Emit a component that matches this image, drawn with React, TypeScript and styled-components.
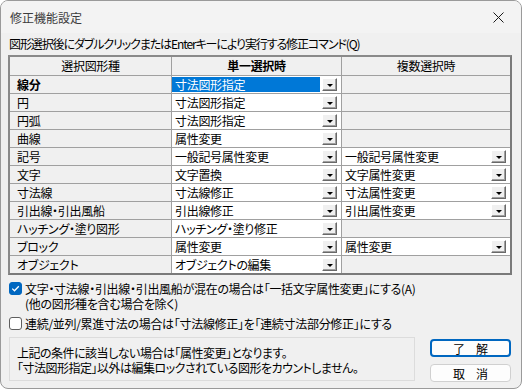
import React from 'react';
import styled, { createGlobalStyle } from 'styled-components';

const GlobalStyle = createGlobalStyle`
  html, body {
    margin: 0;
    padding: 0;
    background: #ffffff;
  }
  * {
    box-sizing: border-box;
  }
`;

const Window = styled.div`
  width: 522px;
  height: 389px;
  display: flex;
  flex-direction: column;
  background: #f0f0f0;
  border: 1px solid #9a9a9a;
  border-radius: 8px;
  overflow: hidden;
  font-family: 'Noto Sans CJK JP', 'Noto Sans', sans-serif;
  font-feature-settings: 'palt';
  font-size: 12px;
  color: #000;
`;

const TitleBar = styled.div`
  height: 32px;
  flex-shrink: 0;
  display: flex;
  align-items: center;
  justify-content: space-between;
  padding-left: 9px;
  background: #f3f3f3;
`;

const TitleText = styled.span`
  color: #3c3c3c;
  font-size: 12px;
`;

const CloseButton = styled.div`
  width: 46px;
  height: 32px;
  display: flex;
  align-items: center;
  justify-content: center;
`;

const Body = styled.div`
  flex: 1;
  display: flex;
  flex-direction: column;
  padding: 3px 9px 0 7px;
`;

const Label = styled.div`
  height: 16px;
  line-height: 16px;
  padding-left: 1px;
  letter-spacing: -1.1px;
  white-space: nowrap;
`;

const Grid = styled.div`
  margin-top: 3px;
  display: grid;
  grid-template-columns: 161px 169px 168px;
  grid-template-rows: 18px repeat(11, 17px);
  gap: 1px;
  background: #a0a0a0;
  border: 2px solid #8a8a8a;
  border-right-color: #7a7a7a;
  border-bottom-color: #7a7a7a;
  letter-spacing: -0.3px;
`;

const HeadCell = styled.div<{ $bold?: boolean }>`
  display: flex;
  align-items: center;
  justify-content: center;
  background: #f0f0f0;
  font-weight: ${(p) => (p.$bold ? 700 : 400)};
  line-height: 18px;
`;

const NameCell = styled.div<{ $bold?: boolean }>`
  display: flex;
  align-items: center;
  padding-left: 7px;
  background: #f0f0f0;
  font-weight: ${(p) => (p.$bold ? 700 : 400)};
  white-space: nowrap;
`;

const ComboCell = styled.div<{ $empty?: boolean }>`
  display: flex;
  align-items: center;
  padding-right: 4px;
  background: ${(p) => (p.$empty ? '#f0f0f0' : '#ffffff')};
`;

const ComboText = styled.span<{ $selected?: boolean }>`
  flex: 1;
  align-self: stretch;
  margin: 1px 2px 1px 0;
  padding-left: 3px;
  display: flex;
  align-items: center;
  white-space: nowrap;
  background: ${(p) => (p.$selected ? '#0078d7' : 'transparent')};
  color: ${(p) => (p.$selected ? '#ffffff' : '#000000')};
`;

const DropButton = styled.span`
  width: 15px;
  height: 13px;
  display: flex;
  align-items: center;
  justify-content: center;
  background: #f0f0f0;
  border: 1px solid;
  border-color: #ffffff #696969 #696969 #ffffff;
  box-shadow: inset -1px -1px 0 #a0a0a0;
`;

const Arrow = styled.span`
  width: 0;
  height: 0;
  margin-top: 1px;
  border-left: 3px solid transparent;
  border-right: 3px solid transparent;
  border-top: 3px solid #000;
`;

const CheckRow = styled.div<{ $top: number }>`
  display: flex;
  align-items: flex-start;
  gap: 3px;
  margin-top: ${(p) => p.$top}px;
  padding-left: 1px;
  letter-spacing: -0.3px;
`;

const Lines = styled.div`
  display: flex;
  flex-direction: column;
`;

const Line = styled.div`
  height: 15px;
  line-height: 15px;
  white-space: nowrap;
`;

const Box = styled.span<{ $checked?: boolean }>`
  width: 13px;
  height: 13px;
  margin-top: 1px;
  flex-shrink: 0;
  border-radius: 3px;
  display: flex;
  align-items: center;
  justify-content: center;
  background: ${(p) => (p.$checked ? '#0067c0' : '#ffffff')};
  border: 1px solid ${(p) => (p.$checked ? '#0067c0' : '#5e5e5e')};
`;

const Bottom = styled.div`
  display: flex;
  margin-top: 6px;
  padding-left: 1px;
  gap: 15px;
`;

const InfoBox = styled.div`
  width: 406px;
  height: 44px;
  padding: 7px 0 0 7px;
  border: 1px solid #dcdcdc;
  background: #f0f0f0;
  letter-spacing: -0.5px;
`;

const Buttons = styled.div`
  display: flex;
  flex-direction: column;
  gap: 7px;
  padding-top: 2px;
`;

const Button = styled.div<{ $default?: boolean }>`
  width: 81px;
  height: 18px;
  display: flex;
  align-items: center;
  justify-content: center;
  gap: 11px;
  border-radius: 4px;
  background: #fdfdfd;
  border: ${(p) => (p.$default ? '2px solid #0067c0' : '1px solid #d0d0d0')};
`;

type Row = { name: string; single: string; multi?: string; bold?: boolean; selected?: boolean };

const rows: Row[] = [
  { name: '線分', single: '寸法図形指定', bold: true, selected: true },
  { name: '円', single: '寸法図形指定' },
  { name: '円弧', single: '寸法図形指定' },
  { name: '曲線', single: '属性変更' },
  { name: '記号', single: '一般記号属性変更', multi: '一般記号属性変更' },
  { name: '文字', single: '文字置換', multi: '文字属性変更' },
  { name: '寸法線', single: '寸法線修正', multi: '寸法属性変更' },
  { name: '引出線・引出風船', single: '引出線修正', multi: '引出属性変更' },
  { name: 'ハッチング・塗り図形', single: 'ハッチング・塗り修正' },
  { name: 'ブロック', single: '属性変更', multi: '属性変更' },
  { name: 'オブジェクト', single: 'オブジェクトの編集' },
];

function Combo({ value, selected }: { value: string; selected?: boolean }) {
  return (
    <ComboCell>
      <ComboText $selected={selected}>{value}</ComboText>
      <DropButton>
        <Arrow />
      </DropButton>
    </ComboCell>
  );
}

export default function App() {
  return (
    <>
      <GlobalStyle />
      <Window>
        <TitleBar>
          <TitleText>修正機能設定</TitleText>
          <CloseButton>
            <svg width="11" height="11" viewBox="0 0 11 11">
              <path d="M0.5 0.5 L10.5 10.5 M10.5 0.5 L0.5 10.5" stroke="#1a1a1a" strokeWidth="1" />
            </svg>
          </CloseButton>
        </TitleBar>

        <Body>
          <Label>図形選択後にダブルクリックまたはEnterキーにより実行する修正コマンド(Q)</Label>

          <Grid>
            <HeadCell>選択図形種</HeadCell>
            <HeadCell $bold>単一選択時</HeadCell>
            <HeadCell>複数選択時</HeadCell>
            {rows.map((r) => (
              <React.Fragment key={r.name}>
                <NameCell $bold={r.bold}>{r.name}</NameCell>
                <Combo value={r.single} selected={r.selected} />
                {r.multi ? <Combo value={r.multi} /> : <ComboCell $empty />}
              </React.Fragment>
            ))}
          </Grid>

          <CheckRow $top={6}>
            <Box $checked>
              <svg width="9" height="9" viewBox="0 0 9 9">
                <path d="M1.2 4.6 L3.5 6.8 L7.8 2.2" stroke="#fff" strokeWidth="1.3" fill="none" />
              </svg>
            </Box>
            <Lines>
              <Line>文字・寸法線・引出線・引出風船が混在の場合は「一括文字属性変更」にする(A)</Line>
              <Line>(他の図形種を含む場合を除く)</Line>
            </Lines>
          </CheckRow>

          <CheckRow $top={5}>
            <Box />
            <Line>連続/並列/累進寸法の場合は「寸法線修正」を「連続寸法部分修正」にする</Line>
          </CheckRow>

          <Bottom>
            <InfoBox>
              <Line>上記の条件に該当しない場合は「属性変更」となります。</Line>
              <Line>「寸法図形指定」以外は編集ロックされている図形をカウントしません。</Line>
            </InfoBox>
            <Buttons>
              <Button $default>
                <span>了</span>
                <span>解</span>
              </Button>
              <Button>
                <span>取</span>
                <span>消</span>
              </Button>
            </Buttons>
          </Bottom>
        </Body>
      </Window>
    </>
  );
}
